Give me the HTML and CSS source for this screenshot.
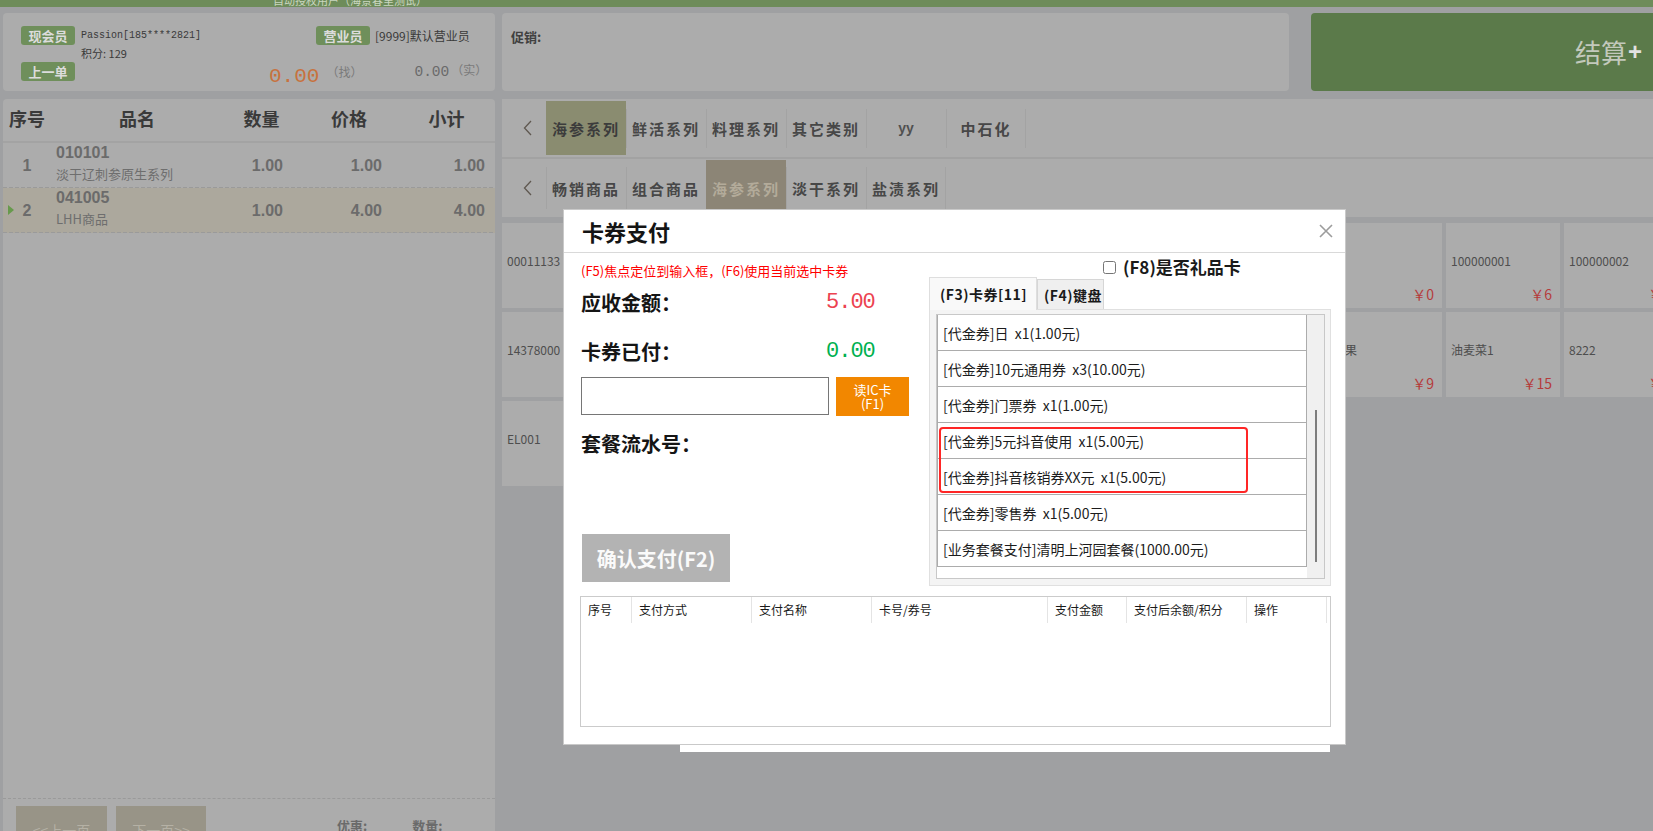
FILE: index.html
```html
<!DOCTYPE html>
<html lang="zh-CN">
<head>
<meta charset="utf-8">
<title>收银台 - 卡券支付</title>
<link rel="stylesheet" href="styles.css">
</head>
<body>
<div class="topbar"><span class="topbar-text">自动授权用户（海景春里测试）</span></div>
<div class="layout">
  <div class="left-col">
    <section class="member-panel">
      <span class="badge b-member">现会员</span>
      <span class="member-name">Passion[185****2821]</span>
      <span class="badge b-staff">营业员</span>
      <span class="staff-name">[9999]默认营业员</span>
      <span class="points">积分: 129</span>
      <span class="badge b-last">上一单</span>
      <div class="amounts">
        <span class="change">0.00</span><span class="unit u-change">（找）</span>
        <span class="paid">0.00</span><span class="unit u-paid">（实）</span>
      </div>
    </section>
    <section class="cart">
      <div class="cart-head"><span>序号</span><span>品名</span><span>数量</span><span>价格</span><span>小计</span></div>
      <div class="cart-row">
        <span class="c-no">1</span>
        <span class="c-name"><b>010101</b><i>淡干辽刺参原生系列</i></span>
        <span class="c-num n-qty">1.00</span>
        <span class="c-num n-price">1.00</span>
        <span class="c-num n-sub">1.00</span>
      </div>
      <div class="cart-row sel">
        <span class="c-no">2</span>
        <span class="c-name"><b>041005</b><i>LHH商品</i></span>
        <span class="c-num n-qty">1.00</span>
        <span class="c-num n-price">4.00</span>
        <span class="c-num n-sub">4.00</span>
      </div>
      <div class="cart-spacer"></div>
      <div class="cart-foot">
        <button class="page-btn">&lt;&lt;上一页</button>
        <button class="page-btn">下一页&gt;&gt;</button>
        <span class="sum sum-disc">优惠:</span>
        <span class="sum sum-qty">数量:</span>
      </div>
    </section>
  </div>
  <div class="right-col">
    <div class="top-row">
      <section class="promo"><span class="promo-label">促销:</span></section>
      <button class="checkout"><span class="co-text">结算</span><span class="co-plus">+</span></button>
    </div>
    <div class="cats">
      <div class="cat-row r1">
        <span class="cat-arrow"><svg width="9" height="16" viewBox="0 0 9 16"><polyline points="8,1 1.5,8 8,15" fill="none" stroke="#5f5850" stroke-width="1.3"/></svg></span>
        <span class="cat on">海参系列</span>
        <span class="cat">鲜活系列</span>
        <span class="cat">料理系列</span>
        <span class="cat">其它类别</span>
        <span class="cat latin">yy</span>
        <span class="cat">中石化</span>
      </div>
      <div class="cat-row r2">
        <span class="cat-arrow"><svg width="9" height="16" viewBox="0 0 9 16"><polyline points="8,1 1.5,8 8,15" fill="none" stroke="#5f5850" stroke-width="1.3"/></svg></span>
        <span class="cat">畅销商品</span>
        <span class="cat">组合商品</span>
        <span class="cat on">海参系列</span>
        <span class="cat">淡干系列</span>
        <span class="cat">盐渍系列</span>
      </div>
    </div>
    <div class="products">
      <div class="tile"><span class="t-name">00011133</span><span class="t-price">￥12</span></div>
      <div class="tile"><span class="t-name">辽参礼盒</span><span class="t-price">￥88</span></div>
      <div class="tile"><span class="t-name">69211685</span><span class="t-price">￥3</span></div>
      <div class="tile"><span class="t-name">海参500g</span><span class="t-price">￥268</span></div>
      <div class="tile"><span class="t-name">鲜活海参</span><span class="t-price">￥120</span></div>
      <div class="tile"><span class="t-name">10086</span><span class="t-price">￥5</span></div>
      <div class="tile"><span class="t-name">组合套餐</span><span class="t-price">￥30</span></div>
      <div class="tile"><span class="t-name">9</span><span class="t-price">￥0</span></div>
      <div class="tile"><span class="t-name">100000001</span><span class="t-price">￥6</span></div>
      <div class="tile"><span class="t-name">100000002</span><span class="t-price">￥8</span></div>

      <div class="tile"><span class="t-name">14378000</span><span class="t-price">￥20</span></div>
      <div class="tile"><span class="t-name">即食海参</span><span class="t-price">￥99</span></div>
      <div class="tile"><span class="t-name">海肠</span><span class="t-price">￥45</span></div>
      <div class="tile"><span class="t-name">鲍鱼</span><span class="t-price">￥60</span></div>
      <div class="tile"><span class="t-name">扇贝</span><span class="t-price">￥18</span></div>
      <div class="tile"><span class="t-name">海胆</span><span class="t-price">￥35</span></div>
      <div class="tile"><span class="t-name">虾夷贝</span><span class="t-price">￥22</span></div>
      <div class="tile"><span class="t-name">苹果</span><span class="t-price">￥9</span></div>
      <div class="tile"><span class="t-name">油麦菜1</span><span class="t-price">￥15</span></div>
      <div class="tile"><span class="t-name">8222</span><span class="t-price">￥7</span></div>

      <div class="tile"><span class="t-name">EL001</span><span class="t-price">￥1</span></div>
      <div class="tile"><span class="t-name">EL002</span><span class="t-price">￥2</span></div>
      <div class="tile"><span class="t-name">EL003</span><span class="t-price">￥3</span></div>
    </div>
  </div>
</div>

<div class="under-dialog"></div>

<div class="modal">
  <div class="modal-head">
    <span class="modal-title">卡券支付</span>
    <svg class="close" width="14" height="14" viewBox="0 0 14 14"><path d="M1 1 L13 13 M13 1 L1 13" stroke="#9c9c9c" stroke-width="1.6" fill="none"/></svg>
  </div>
  <div class="modal-body">
    <div class="pay-left">
      <p class="hint">(F5)焦点定位到输入框，(F6)使用当前选中卡券</p>
      <div class="amount-row due"><span class="label">应收金额：</span><span class="value">5.00</span></div>
      <div class="amount-row done"><span class="label">卡券已付：</span><span class="value">0.00</span></div>
      <div class="card-row">
        <input class="card-input" type="text">
        <button class="ic-btn">读IC卡<br>(F1)</button>
      </div>
      <div class="label serial">套餐流水号：</div>
      <button class="confirm">确认支付(F2)</button>
    </div>
    <div class="pay-right">
      <div class="gift-row"><input type="checkbox" id="gift"><label for="gift">(F8)是否礼品卡</label></div>
      <div class="tabs">
        <span class="tab active">(F3)卡券[11]</span>
        <span class="tab">(F4)键盘</span>
      </div>
      <div class="tab-panel">
        <div class="coupon-list">
          <div class="items">
            <div class="item">[代金券]日  x1(1.00元)</div>
            <div class="item">[代金券]10元通用券  x3(10.00元)</div>
            <div class="item">[代金券]门票券  x1(1.00元)</div>
            <div class="item">[代金券]5元抖音使用  x1(5.00元)</div>
            <div class="item">[代金券]抖音核销券XX元  x1(5.00元)</div>
            <div class="item">[代金券]零售券  x1(5.00元)</div>
            <div class="item">[业务套餐支付]清明上河园套餐(1000.00元)</div>
          </div>
          <div class="scroll"><div class="thumb"></div></div>
          <div class="mark"></div>
        </div>
      </div>
    </div>
    <div class="pay-table">
      <div class="pay-head">
        <span>序号</span><span>支付方式</span><span>支付名称</span><span>卡号/券号</span><span>支付金额</span><span>支付后余额/积分</span><span>操作</span>
      </div>
    </div>
  </div>
</div>
</body>
</html>
```

FILE: styles.css
```css
* { box-sizing: border-box; }
html, body { margin: 0; padding: 0; }
body {
  width: 1653px;
  height: 831px;
  overflow: hidden;
  position: relative;
  background: #9fa0a2;
  font-family: "Noto Sans CJK SC", "Noto Sans", sans-serif;
  color: #404040;
}
button { font-family: "Noto Sans CJK SC", "Noto Sans", sans-serif; cursor: pointer; }
p { margin: 0; }

/* top bar */
.topbar { height: 7px; background: #6e8c5a; overflow: hidden; padding-left: 273px; }
.topbar-text { display: block; font-size: 11px; line-height: 11px; margin-top: -5px; color: #c9d6bf; }

.layout {
  display: grid;
  grid-template-columns: 492px 1151px;
  column-gap: 7px;
  padding: 6px 0 0 3px;
  height: 824px;
}

/* left column */
.left-col { display: flex; flex-direction: column; gap: 8px; min-height: 0; }
.member-panel {
  height: 78px;
  background: #acacac;
  border-radius: 4px;
  display: grid;
  grid-template-columns: 60px 235px 59px auto;
  grid-template-rows: 19px 17px 19px;
  padding: 13px 0 0 18px;
}
.badge {
  width: 54px; height: 19px;
  display: flex; align-items: center; justify-content: center;
  background: #6f8f5b; color: #dcdcdc;
  font-size: 13px; font-weight: 700; border-radius: 3px;
}
.b-member { grid-column: 1; grid-row: 1; }
.b-staff { grid-column: 3; grid-row: 1; }
.b-last { grid-column: 1; grid-row: 3; }
.member-name { grid-column: 2; grid-row: 1; font-family: "Liberation Mono", monospace; font-size: 10px; line-height: 19px; color: #3a3a3a; }
.staff-name { grid-column: 4; grid-row: 1; font-size: 12px; line-height: 19px; color: #3a3a3a; }
.points { grid-column: 2; grid-row: 2; font-size: 11px; line-height: 17px; color: #3a3a3a; }
.amounts { grid-column: 2 / 5; grid-row: 3; display: flex; align-items: flex-start; }
.change { margin-left: 188px; margin-top: 4px; font-family: "Liberation Mono", monospace; font-size: 21px; line-height: 21px; color: #c7723e; }
.unit { font-size: 12px; line-height: 14px; color: #7a7a7a; }
.u-change { margin-left: 7px; margin-top: 3px; }
.paid { margin-left: 52px; margin-top: 3px; font-family: "Liberation Mono", monospace; font-size: 14.5px; line-height: 15px; color: #6a6a6a; }
.u-paid { margin-left: 2px; margin-top: 1px; }

.cart {
  flex: 1; min-height: 0;
  background: #acacac;
  display: flex; flex-direction: column;
  overflow: hidden;
  border-radius: 4px 4px 0 0;
}
.cart-head {
  display: grid;
  grid-template-columns: 48px 172px 77px 98px 97px;
  height: 44px;
  padding-bottom: 4px;
  border-bottom: 2px solid #a3a3a3;
  align-items: center;
  text-align: center;
  font-size: 18px; font-weight: 700; color: #3a3a3a;
}
.cart-row {
  display: grid;
  grid-template-columns: 48px 172px 77px 98px 97px;
  height: 45px;
  position: relative;
  background: linear-gradient(90deg, #9a9a9a 4px, transparent 4px) left bottom / 6px 1px repeat-x;
}
.cart-row.sel { background-color: #aca89d; }
.cart-row.sel::before {
  content: "";
  position: absolute; left: 5px; top: 17px;
  border-left: 6px solid #679a4c;
  border-top: 5.5px solid transparent;
  border-bottom: 5.5px solid transparent;
}
.c-no, .c-num { align-self: center; font-family: "Liberation Sans", sans-serif; font-weight: 700; font-size: 16px; color: #6b6b6b; }
.c-no { text-align: center; }
.c-num { text-align: right; }
.n-qty { padding-right: 17px; }
.n-price { padding-right: 16px; }
.n-sub { padding-right: 10px; }
.c-name { display: flex; flex-direction: column; padding: 1px 0 0 5px; }
.c-name b { font-family: "Liberation Sans", sans-serif; font-size: 16px; line-height: 18px; color: #6b6b6b; }
.c-name i { font-style: normal; font-size: 13px; line-height: 18px; margin-top: 3px; color: #6e6e6e; }
.cart-spacer { flex: 1; }
.cart-foot {
  height: 33px; flex: none;
  border-top: 1px dashed #9a9a9a;
  display: flex; align-items: flex-start;
  padding: 7px 0 0 13px;
}
.page-btn {
  width: 91px; height: 48px; border: 0; padding: 0;
  background: #989487; color: #b5b1a5;
  font-size: 14px; line-height: 48px;
}
.page-btn + .page-btn { margin-left: 9px; width: 90px; }
.sum { font-size: 13px; font-weight: 700; color: #6a6a6a; line-height: 18px; margin-top: 11px; }
.sum-disc { margin-left: 131px; }
.sum-qty { margin-left: 45px; }

/* right column */
.right-col { display: flex; flex-direction: column; overflow: hidden; min-width: 0; }
.top-row { display: flex; height: 78px; gap: 22px; }
.promo { width: 787px; background: #acacac; border-radius: 4px; padding: 10px 9px; }
.promo-label { font-size: 13px; font-weight: 700; line-height: 16px; color: #404040; }
.checkout {
  flex: 1; border: 0; border-radius: 4px 0 0 4px;
  background: #5b7a4a;
  display: flex; align-items: center; justify-content: flex-end;
  padding: 0 11px 0 0;
}
.co-text { font-size: 26px; color: #c3c9bc; line-height: 30px; }
.co-plus { font-family: "Liberation Sans", sans-serif; font-size: 24px; font-weight: 700; color: #e2e2e2; line-height: 30px; margin-left: 1px; }

.cats { margin-top: 8px; background: #acacac; }
.cat-row { display: flex; height: 58px; }
.cat-row.r1 { height: 60px; border-bottom: 2px solid #a2a2a2; }
.cat-arrow { width: 44px; display: flex; align-items: center; padding-left: 21px; }
.cat {
  width: 80px; margin: 2px 0;
  display: flex; align-items: center; justify-content: center;
  font-size: 15px; font-weight: 700; letter-spacing: 2px; color: #474747;
  background: linear-gradient(#a3a3a3, #a3a3a3) left center / 1px 39px no-repeat;
}
.cat:last-child { background: linear-gradient(#a3a3a3, #a3a3a3) left center / 1px 39px no-repeat, linear-gradient(#a3a3a3, #a3a3a3) right center / 1px 39px no-repeat; }
.r2 .cat { margin: 1px 0; background-size: 1px 42px; }
.r2 .cat:last-child { background-size: 1px 42px, 1px 42px; }
.cat.latin { font-family: "Liberation Sans", sans-serif; font-size: 14px; letter-spacing: 0; color: #505050; }
.r1 .cat.on { background: #8a8c70; color: #3c3c3c; }
.r2 .cat.on { background: #8c8576; color: #b3ab9a; }

.products {
  flex: 1;
  padding-top: 6px;
  display: grid;
  grid-template-columns: repeat(10, 114px);
  grid-auto-rows: 85px;
  gap: 4px;
  align-content: start;
}
.tile {
  background: #acacac;
  display: flex; flex-direction: column;
  padding: 30px 8px 5px 5px;
}
.t-name { font-size: 12px; line-height: 16px; color: #4e4e4e; white-space: nowrap; }
.t-price { margin-top: auto; text-align: right; font-size: 14px; line-height: 18px; color: #b53b3b; }

/* dialog behind */
.under-dialog { position: absolute; left: 680px; top: 600px; width: 650px; height: 152px; background: #ffffff; z-index: 5; }

/* modal */
.modal {
  position: absolute; left: 563px; top: 209px;
  width: 783px; height: 536px;
  background: #ffffff;
  border: 1px solid #c9c9c9;
  z-index: 10;
  color: #1a1a1a;
}
.modal-head {
  height: 43px;
  border-bottom: 1px solid #d9d9d9;
  display: flex; align-items: center; justify-content: space-between;
  padding: 0 12px 0 18px;
}
.modal-title { font-size: 22px; font-weight: 700; color: #141414; line-height: 26px; }
.close { display: block; }
.modal-body {
  display: grid;
  grid-template-columns: 349px 402px;
  padding: 0 14px 0 16px;
}
.pay-left { padding-left: 1px; display: flex; flex-direction: column; align-items: flex-start; }
.hint { margin-top: 9px; font-size: 13px; line-height: 18px; color: #ff0000; }
.amount-row { display: grid; grid-template-columns: 245px auto; height: 30px; align-items: center; }
.amount-row.due { margin-top: 8px; }
.amount-row.done { margin-top: 19px; }
.label { font-size: 20px; font-weight: 700; color: #151515; line-height: 30px; }
.value { font-family: "Liberation Mono", monospace; font-size: 22px; letter-spacing: -1px; line-height: 30px; }
.due .value { color: #ec4250; }
.done .value { color: #00b04f; }
.card-row { display: flex; gap: 7px; margin-top: 10px; }
.card-input { width: 248px; height: 38px; border: 1px solid #767676; margin: 0; padding: 0 4px; border-radius: 0; background: #fff; }
.ic-btn {
  width: 73px; height: 39px; border: 0; padding: 0;
  background: #f28700; color: #ffffff;
  font-size: 13px; line-height: 14px;
}
.serial { margin-top: 13px; }
.confirm {
  margin-top: 75px; margin-left: 1px;
  width: 148px; height: 48px; border: 0; padding: 0;
  background: #b3b3b3; color: #fafafa;
  font-size: 20px; font-weight: 700;
}

.gift-row { margin-top: 4px; height: 20px; display: flex; align-items: center; padding-left: 174px; }
.gift-row input { margin: 0; width: 13px; height: 13px; }
.gift-row label { margin-left: 7px; font-size: 17px; font-weight: 700; color: #1a1a1a; line-height: 20px; }
.tabs { display: flex; align-items: flex-end; height: 32px; }
.tab {
  height: 30px; width: 67px; padding: 0 0 0 6px;
  border: 1px solid #d6d6d6; border-bottom: 0;
  background: #efefef;
  display: flex; align-items: center;
  font-size: 14px; font-weight: 700; letter-spacing: 0.5px; color: #1a1a1a;
}
.tab.active {
  width: 108px; height: 33px; padding-left: 10px;
  background: #f9f9f9; border-color: #dedede;
  margin-bottom: -1px; position: relative; z-index: 1;
}
.tab-panel {
  height: 277px;
  border: 1px solid #e0e0e0;
  background: #f4f4f4;
  padding: 4px 5px 6px 6px;
}
.coupon-list { height: 100%; border: 1px solid #c8c8c8; background: #ffffff; display: flex; position: relative; }
.items { flex: 1; }
.item {
  height: 36px;
  border: 1px solid #acacac; border-top: 0;
  display: flex; align-items: center;
  padding-left: 5px;
  font-size: 14px; color: #1c1c1c; white-space: pre;
}
.scroll { width: 17px; background: #f0f0f0; padding-top: 95px; }
.thumb { width: 2px; height: 152px; margin-left: 8px; background: #7d7d7d; }
.mark {
  position: absolute; left: 2px; top: 112px;
  width: 309px; height: 66px;
  border: 2px solid #ff2626; border-radius: 4px;
  pointer-events: none;
}
.pay-table { grid-column: 1 / -1; margin-top: 10px; height: 131px; border: 1px solid #cbcbcb; }
.pay-head { display: grid; grid-template-columns: 51px 120px 120px 176px 79px 120px 80px; height: 26px; }
.pay-head span { border-right: 1px solid #e4e4e4; padding-left: 7px; font-size: 12px; line-height: 26px; color: #1a1a1a; }
```
